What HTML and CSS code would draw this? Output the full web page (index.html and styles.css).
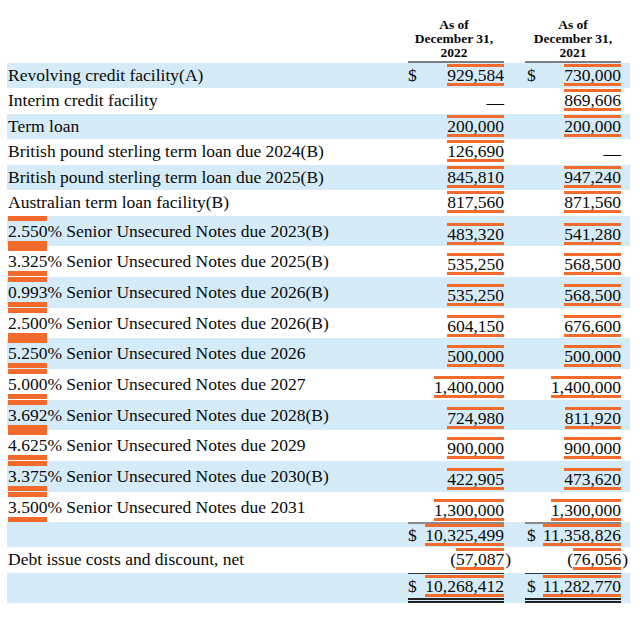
FILE: index.html
```html
<!DOCTYPE html>
<html>
<head>
<meta charset="utf-8">
<link rel="stylesheet" href="styles.css">
</head>
<body>
<div class="sheet">
  <div class="row head">
    <div></div>
    <div class="col c1">As of<br>December 31,<br>2022</div>
    <div class="col">As of<br>December 31,<br>2021</div>
  </div>

  <div class="row ra blue">
    <div class="label">Revolving credit facility(A)</div>
    <div class="cell"><span>$</span><span class="hl">929,584</span></div>
    <div class="cell c2"><span>$</span><span class="hl">730,000</span></div>
  </div>
  <div class="row ra">
    <div class="label">Interim credit facility</div>
    <div class="cell right"><span class="dash">—</span></div>
    <div class="cell right c2"><span class="hl">869,606</span></div>
  </div>
  <div class="row ra blue">
    <div class="label">Term loan</div>
    <div class="cell right"><span class="hl">200,000</span></div>
    <div class="cell right c2"><span class="hl">200,000</span></div>
  </div>
  <div class="row ra">
    <div class="label">British pound sterling term loan due 2024(B)</div>
    <div class="cell right"><span class="hl">126,690</span></div>
    <div class="cell right c2"><span class="dash">—</span></div>
  </div>
  <div class="row ra blue">
    <div class="label">British pound sterling term loan due 2025(B)</div>
    <div class="cell right"><span class="hl">845,810</span></div>
    <div class="cell right c2"><span class="hl">947,240</span></div>
  </div>
  <div class="row ra">
    <div class="label">Australian term loan facility(B)</div>
    <div class="cell right"><span class="hl">817,560</span></div>
    <div class="cell right c2"><span class="hl">871,560</span></div>
  </div>

  <div class="row rb blue">
    <div class="label note"><span class="pct">2.550</span>% Senior Unsecured Notes due 2023(B)</div>
    <div class="cell right"><span class="hl">483,320</span></div>
    <div class="cell right c2"><span class="hl">541,280</span></div>
  </div>
  <div class="row rb">
    <div class="label note"><span class="pct">3.325</span>% Senior Unsecured Notes due 2025(B)</div>
    <div class="cell right"><span class="hl">535,250</span></div>
    <div class="cell right c2"><span class="hl">568,500</span></div>
  </div>
  <div class="row rb blue">
    <div class="label note"><span class="pct">0.993</span>% Senior Unsecured Notes due 2026(B)</div>
    <div class="cell right"><span class="hl">535,250</span></div>
    <div class="cell right c2"><span class="hl">568,500</span></div>
  </div>
  <div class="row rb">
    <div class="label note"><span class="pct">2.500</span>% Senior Unsecured Notes due 2026(B)</div>
    <div class="cell right"><span class="hl">604,150</span></div>
    <div class="cell right c2"><span class="hl">676,600</span></div>
  </div>
  <div class="row rb blue">
    <div class="label note"><span class="pct">5.250</span>% Senior Unsecured Notes due 2026</div>
    <div class="cell right"><span class="hl">500,000</span></div>
    <div class="cell right c2"><span class="hl">500,000</span></div>
  </div>
  <div class="row rb">
    <div class="label note"><span class="pct">5.000</span>% Senior Unsecured Notes due 2027</div>
    <div class="cell right"><span class="hl">1,400,000</span></div>
    <div class="cell right c2"><span class="hl">1,400,000</span></div>
  </div>
  <div class="row rb blue">
    <div class="label note"><span class="pct">3.692</span>% Senior Unsecured Notes due 2028(B)</div>
    <div class="cell right"><span class="hl">724,980</span></div>
    <div class="cell right c2"><span class="hl">811,920</span></div>
  </div>
  <div class="row rb">
    <div class="label note"><span class="pct">4.625</span>% Senior Unsecured Notes due 2029</div>
    <div class="cell right"><span class="hl">900,000</span></div>
    <div class="cell right c2"><span class="hl">900,000</span></div>
  </div>
  <div class="row rb blue">
    <div class="label note"><span class="pct">3.375</span>% Senior Unsecured Notes due 2030(B)</div>
    <div class="cell right"><span class="hl">422,905</span></div>
    <div class="cell right c2"><span class="hl">473,620</span></div>
  </div>
  <div class="row rb">
    <div class="label note"><span class="pct">3.500</span>% Senior Unsecured Notes due 2031</div>
    <div class="cell right"><span class="hl">1,300,000</span></div>
    <div class="cell right c2"><span class="hl">1,300,000</span></div>
  </div>

  <div class="row rt blue">
    <div class="label"></div>
    <div class="cell sub"><span>$</span><span class="hl">10,325,499</span></div>
    <div class="cell sub c2"><span>$</span><span class="hl">11,358,826</span></div>
  </div>
  <div class="row rd">
    <div class="label">Debt issue costs and discount, net</div>
    <div class="cell right"><span>(</span><span class="hl">57,087</span><span class="close">)</span></div>
    <div class="cell right c2"><span>(</span><span class="hl">76,056</span><span class="close">)</span></div>
  </div>
  <div class="row rf blue">
    <div class="label"></div>
    <div class="cell total"><span>$</span><span class="hl">10,268,412</span></div>
    <div class="cell total c2"><span>$</span><span class="hl">11,282,770</span></div>
  </div>
</div>
</body>
</html>
```

FILE: styles.css
```css
* { box-sizing: border-box; }

body {
  margin: 0;
  background: #ffffff;
  color: #0a0a0a;
  font-family: "Liberation Serif", "Times New Roman", serif;
}

.sheet {
  width: 630px;
  padding: 18px 0 0 7px;
}

.row {
  display: grid;
  grid-template-columns: 380px 96px 96px;
  column-gap: 21px;
  padding-right: 9px;
  align-items: start;
}

.row.blue { background: #d5ebf7; }

.head {
  font-weight: bold;
  font-size: 13.5px;
  line-height: 14.2px;
}

.head .col {
  text-align: center;
  border-bottom: 2px solid #7d7d7d;
}

.head .c1 { padding-right: 4px; }

.ra { height: 25.5px; }
.rb { height: 30.7px; }
.rt { height: 25px; }
.rd { height: 26px; }
.rf { height: 30px; }

.label {
  font-size: 17.5px;
  line-height: 25.5px;
  padding-left: 1px;
  white-space: nowrap;
}

.label.note { line-height: 20px; }

.pct {
  display: inline-block;
  line-height: 20px;
  border-top: 5px solid #f26b2c;
  border-bottom: 5px solid #f26b2c;
}

.cell {
  font-size: 17.5px;
  line-height: 16px;
  display: flex;
  justify-content: space-between;
  align-items: baseline;
  padding-top: 1px;
}

.cell.c2 { padding-left: 2px; }

.cell.right { justify-content: flex-end; }

.rb .cell { padding-top: 7px; }

.hl {
  display: inline-block;
  line-height: 16px;
  border-top: 3px solid #f26b2c;
  border-bottom: 3px solid #f26b2c;
}

.dash {
  display: inline-block;
  transform: translateY(5px);
}

.close { margin-right: -7px; margin-left: 1px; }

.cell.sub {
  border-top: 2px solid #8a8a8a;
  padding-top: 0;
}

.cell.total {
  border-top: 1px solid #333333;
  border-bottom: 5px double #222222;
  padding-top: 1px;
  height: 30px;
}
```
